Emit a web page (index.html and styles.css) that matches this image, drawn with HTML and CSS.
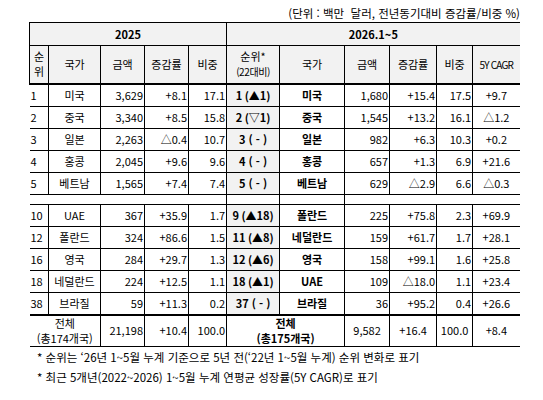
FILE: index.html
```html
<!DOCTYPE html>
<html lang="ko"><head><meta charset="utf-8">
<meta name="viewport" content="initial-scale=1.0, width=device-width">
<title>수출 국가별 순위</title>
<link rel="stylesheet" href="styles.css">
</head>
<body>
<div class="page">
<p class="unit">(단위 : 백만&nbsp; 달러, 전년동기대비 증감률/비중 %)</p>

<table class="rank">
<colgroup>
  <col style="width:19px"><col style="width:52px"><col style="width:44px"><col style="width:44px"><col style="width:38px">
  <col style="width:53px"><col style="width:65px"><col style="width:45px"><col style="width:47px"><col style="width:36px"><col style="width:47px">
</colgroup>
<thead>
<tr class="h1">
  <th colspan="5" class="first">2025</th>
  <th colspan="6">2026.1~5</th>
</tr>
<tr class="h2">
  <th class="first">순<br>위</th><th>국가</th><th>금액</th><th>증감률</th><th>비중</th>
  <th class="rk">순위*<br><span class="sub">(22대비)</span></th><th>국가</th><th>금액</th><th>증감률</th><th>비중</th><th class="cagr">5Y CAGR</th>
</tr>
</thead>
<tbody>
<tr><td class="no">1</td><td class="c">미국</td><td class="n">3,629</td><td class="n">+8.1</td><td class="n">17.1</td>
    <td class="rk">1 (▲1)</td><td class="c b">미국</td><td class="n">1,680</td><td class="n">+15.4</td><td class="n">17.5</td><td class="c">+9.7</td></tr>
<tr><td class="no">2</td><td class="c">중국</td><td class="n">3,340</td><td class="n">+8.5</td><td class="n">15.8</td>
    <td class="rk">2 (▽1)</td><td class="c b">중국</td><td class="n">1,545</td><td class="n">+13.2</td><td class="n">16.1</td><td class="c">△1.2</td></tr>
<tr><td class="no">3</td><td class="c">일본</td><td class="n">2,263</td><td class="n">△0.4</td><td class="n">10.7</td>
    <td class="rk">3 ( - )</td><td class="c b">일본</td><td class="n">982</td><td class="n">+6.3</td><td class="n">10.3</td><td class="c">+0.2</td></tr>
<tr><td class="no">4</td><td class="c">홍콩</td><td class="n">2,045</td><td class="n">+9.6</td><td class="n">9.6</td>
    <td class="rk">4 ( - )</td><td class="c b">홍콩</td><td class="n">657</td><td class="n">+1.3</td><td class="n">6.9</td><td class="c">+21.6</td></tr>
<tr><td class="no">5</td><td class="c">베트남</td><td class="n">1,565</td><td class="n">+7.4</td><td class="n">7.4</td>
    <td class="rk">5 ( - )</td><td class="c b">베트남</td><td class="n">629</td><td class="n">△2.9</td><td class="n">6.6</td><td class="c">△0.3</td></tr>
<tr class="gap"><td colspan="5"></td><td class="sep"></td><td class="sep"></td><td colspan="4"></td></tr>
<tr><td class="no">10</td><td class="c">UAE</td><td class="n">367</td><td class="n">+35.9</td><td class="n">1.7</td>
    <td class="rk">9 (▲18)</td><td class="c b">폴란드</td><td class="n">225</td><td class="n">+75.8</td><td class="n">2.3</td><td class="c">+69.9</td></tr>
<tr><td class="no">12</td><td class="c">폴란드</td><td class="n">324</td><td class="n">+86.6</td><td class="n">1.5</td>
    <td class="rk">11 (▲8)</td><td class="c b">네덜란드</td><td class="n">159</td><td class="n">+61.7</td><td class="n">1.7</td><td class="c">+28.1</td></tr>
<tr><td class="no">16</td><td class="c">영국</td><td class="n">284</td><td class="n">+29.7</td><td class="n">1.3</td>
    <td class="rk">12 (▲6)</td><td class="c b">영국</td><td class="n">158</td><td class="n">+99.1</td><td class="n">1.6</td><td class="c">+25.8</td></tr>
<tr><td class="no">18</td><td class="c">네덜란드</td><td class="n">224</td><td class="n">+12.5</td><td class="n">1.1</td>
    <td class="rk">18 (▲1)</td><td class="c b">UAE</td><td class="n">109</td><td class="n">△18.0</td><td class="n">1.1</td><td class="c">+23.4</td></tr>
<tr><td class="no">38</td><td class="c">브라질</td><td class="n">59</td><td class="n">+11.3</td><td class="n">0.2</td>
    <td class="rk">37 ( - )</td><td class="c b">브라질</td><td class="n">36</td><td class="n">+95.2</td><td class="n">0.4</td><td class="c">+26.6</td></tr>
</tbody>
<tfoot>
<tr class="total">
  <td colspan="2" class="c">전체<br>(총174개국)</td><td class="n">21,198</td><td class="n">+10.4</td><td class="n">100.0</td>
  <td colspan="2" class="c b">전체<br>(총175개국)</td><td class="c">9,582</td><td class="c">+16.4</td><td class="c">100.0</td><td class="c">+8.4</td>
</tr>
</tfoot>
</table>

<p class="note">* 순위는 ‘26년 1~5월 누계 기준으로 5년 전(‘22년 1~5월 누계) 순위 변화로 표기</p>
<p class="note">* 최근 5개년(2022~2026) 1~5월 누계 연평균 성장률(5Y CAGR)로 표기</p>
</div>
</body>
</html>
```

FILE: styles.css
```css
html,body,p,table{margin:0;padding:0;}
*{box-sizing:border-box;}
body{
  color:#000;
  background:#fff;
  font-family:"Noto Sans CJK KR","Noto Sans",sans-serif;
  font-size:11px;
}
.page{
  width:543px;
  padding:6px 0 0 29px;
}
.unit{
  width:491px;
  text-align:right;
  font-size:11.5px;
  line-height:14px;
  margin-bottom:2px;
}
.rank{
  width:490px;
  table-layout:fixed;
  border-collapse:collapse;
  line-height:13px;
}
.rank th,.rank td{
  border-top:1px solid #000;
  border-bottom:1px solid #000;
  border-left:1px solid #000;
  padding:0 1px;
  white-space:nowrap;
  overflow:hidden;
}
.rank th{background:#f2f2f2;font-weight:normal;text-align:center;}
.rank tr > :first-child:not(.first){border-left:none;}
.h1 th{height:23px;font-weight:bold;}
.h2 th{height:38px;border-bottom:2px solid #000;line-height:15px;}
.sub{font-size:10px;letter-spacing:-0.4px;}
.cagr{font-weight:bold;font-size:10px;letter-spacing:-0.8px;}
.rank tbody td{height:22px;}
.rank tbody tr:first-child td{height:23px;}
.n{text-align:right;}
.c{text-align:center;}
.b{font-weight:bold;}
.no{text-align:left;}
td.rk{background:#f2f2f2;font-weight:bold;text-align:center;}
.gap td{height:10px !important;border-left:none;}
.gap td.sep{border-left:1px solid #000;}
.gap td.sep + td.sep + td{border-left:1px solid #000;}
.total td{height:32px;border-top:2px solid #000;line-height:15px;}
.note{
  font-size:11.5px;
  line-height:20px;
  padding-left:8px;
}
```
